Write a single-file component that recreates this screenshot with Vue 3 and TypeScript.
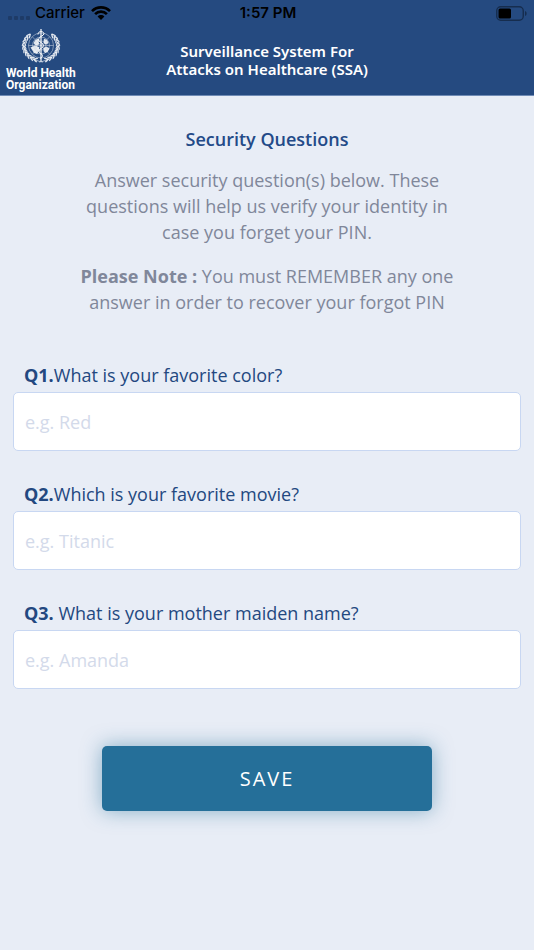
<script setup lang="ts">
import { reactive } from 'vue'

interface Question {
  id: string
  prefix: string
  text: string
  placeholder: string
}

const questions: Question[] = [
  { id: 'q1', prefix: 'Q1.', text: 'What is your favorite color?', placeholder: 'e.g. Red' },
  { id: 'q2', prefix: 'Q2.', text: 'Which is your favorite movie?', placeholder: 'e.g. Titanic' },
  { id: 'q3', prefix: 'Q3.', text: ' What is your mother maiden name?', placeholder: 'e.g. Amanda' },
]

const answers = reactive<Record<string, string>>({ q1: '', q2: '', q3: '' })

// Leaves of the laurel wreath: position and rotation along the left branch.
const leaves = [164, 151, 138, 125, 112, 99, 86, 73, 60, 48].map((deg) => {
  const rad = (deg * Math.PI) / 180
  return { x: 40 - Math.sin(rad) * 34, y: 35 - Math.cos(rad) * 29, deg: -deg }
})
</script>

<template>
  <div class="screen">
    <header class="top">
      <div class="status">
        <div class="carrier">
          <span class="dots"><i v-for="n in 4" :key="n"></i></span>
          <span>Carrier</span>
          <svg class="wifi" viewBox="0 0 20 14" aria-hidden="true">
            <path d="M1 5.2C6 .1 14 .1 19 5.2" />
            <path d="M4.1 8.2c3.3-3.4 8.5-3.4 11.8 0" />
            <path class="solid" d="M6.6 10.4c1.900-1.900 4.900-1.900 6.800 0L10 13.900z" />
          </svg>
        </div>
        <span class="time">1:57 PM</span>
        <svg class="battery" viewBox="0 0 32 15" aria-hidden="true">
          <rect class="case" x="0.75" y="0.75" width="26.500" height="13.500" rx="4" />
          <rect x="2.500" y="2.500" width="12.500" height="10" rx="1.500" />
          <path class="cap" d="M29 5c2.200.7 2.200 4.300 0 5z" />
        </svg>
      </div>
      <div class="bar">
        <div class="logo">
          <svg class="emblem" viewBox="0 0 80 70" aria-hidden="true">
            <g class="thin">
              <circle cx="40" cy="34" r="25" />
              <circle cx="40" cy="34" r="17" />
              <circle cx="40" cy="34" r="9" />
              <path d="M15 34h50M23 17l34 34M57 17L23 51" />
            </g>
            <path class="fill" d="M28 24l5-4 4 2-2 5 2 4-4 3-5-1-3-4zM46 20l6 3 3 5-3 4-5-1-2-5zM19 38l9-4 8 3 1 7-5 7-6-2zM45 39l6-3 6 4-4 7-5 2-3-4z" />
            <g v-for="side in 2" :key="side" :transform="side === 2 ? 'translate(80 0) scale(-1 1)' : undefined">
              <path class="stem" d="M44 67C26 65 7 53 6 35" />
              <g v-for="leaf in leaves" :key="leaf.deg" :transform="`translate(${leaf.x} ${leaf.y}) rotate(${leaf.deg})`">
                <ellipse class="fill" cx="1" cy="-2.600" rx="5" ry="1.500" transform="rotate(24)" />
                <ellipse class="fill" cx="1" cy="2.600" rx="5" ry="1.500" transform="rotate(-24)" />
              </g>
            </g>
            <path class="staff" d="M40 1v64" />
            <path class="snake" d="M34 12c0-8 11-7 12-2 0 5-11 6-11 12s10 6 10 12-9 5-9 11 7 5 7 9-3 4-5 6" />
          </svg>
          <span>World Health<br />Organization</span>
        </div>
        <h1>Surveillance System For<br />Attacks on Healthcare (SSA)</h1>
      </div>
    </header>

    <main>
      <section class="intro">
        <h2>Security Questions</h2>
        <p>Answer security question(s) below. These questions will help us verify your identity in case you forget your PIN.</p>
        <p><strong>Please Note :</strong> You must REMEMBER any one answer in order to recover your forgot PIN</p>
      </section>

      <form @submit.prevent>
        <div v-for="q in questions" :key="q.id" class="field">
          <label :for="q.id"><b>{{ q.prefix }}</b>{{ q.text }}</label>
          <input :id="q.id" v-model="answers[q.id]" type="text" :placeholder="q.placeholder" />
        </div>
        <button type="submit">SAVE</button>
      </form>
    </main>
  </div>
</template>

<style>
body {
  background: #e8edf6;
}
</style>

<style scoped>
.screen {
  min-height: 100vh;
  background: #e8edf6;
  color: #234880;
  font-family: "Open Sans", sans-serif;
  font-size: 18px;
}
.top {
  background: #254a80;
  border-bottom: 1px solid #6f8bb5;
}
.status {
  display: grid;
  grid-template-columns: 1fr auto 1fr;
  align-items: center;
  height: 26px;
  padding: 0 6px 0 8px;
  color: #000;
  font: 500 15px/26px Inter, sans-serif;
}
.time {
  font-weight: 600;
}
.carrier {
  display: flex;
  align-items: center;
}
.dots {
  display: flex;
  gap: 2px;
  margin: 9px 5px 0 0;
}
.dots i {
  width: 4px;
  height: 4px;
  border-radius: 1px;
  background: #1e3b67;
}
.wifi {
  width: 20px;
  height: 14px;
  margin-left: 6px;
  fill: none;
  stroke: #000;
  stroke-width: 2.6;
}
.wifi .solid {
  fill: #000;
  stroke: none;
}
.battery {
  width: 32px;
  height: 15px;
  justify-self: end;
}
.battery .case {
  fill: none;
  stroke: #162d4e;
  stroke-width: 1.4;
}
.battery .cap {
  fill: #162d4e;
}
.bar {
  display: grid;
  grid-template-columns: 1fr auto 1fr;
  align-items: center;
  padding: 2px 6px 4px;
}
.logo {
  display: flex;
  flex-direction: column;
  align-items: center;
  justify-self: start;
  color: #fff;
  font: 700 12px/12px Roboto, sans-serif;
}
.emblem {
  width: 40px;
  height: 36px;
  margin-bottom: 3px;
}
.emblem .thin,
.emblem .stem,
.emblem .staff,
.emblem .snake {
  fill: none;
  stroke: #fff;
  stroke-width: 1.2;
}
.emblem .thin {
  opacity: 0.7;
}
.emblem .staff {
  stroke-width: 2.4;
}
.emblem .snake {
  stroke-width: 2;
}
.emblem .fill {
  fill: #fff;
  opacity: 0.85;
}
h1 {
  margin: 0;
  color: #fff;
  font-family: "Noto Sans", sans-serif;
  font-size: 15px;
  font-weight: 600;
  line-height: 18px;
  text-align: center;
}
main {
  padding: 30px 13px 40px;
}
.intro {
  max-width: 382px;
  margin: 0 auto;
  color: #80879a;
  line-height: 26px;
  text-align: center;
}
h2 {
  margin: 0;
  color: #234a88;
  font-size: 18px;
  font-weight: 600;
  line-height: 26px;
}
.intro p {
  margin: 15px 0 0;
}
.intro p + p {
  margin-top: 18px;
}
form {
  display: flex;
  flex-direction: column;
  gap: 30px;
  padding-top: 47px;
}
.field {
  display: flex;
  flex-direction: column;
  gap: 4px;
}
label {
  padding-left: 11px;
  line-height: 26px;
  white-space: pre-wrap;
}
input {
  box-sizing: border-box;
  width: 100%;
  height: 59px;
  padding: 0 11px;
  border: 1px solid #c8d7f2;
  border-radius: 5px;
  background: #fff;
  color: #234880;
  font: inherit;
}
input::placeholder {
  color: #d3daea;
  opacity: 1;
}
button {
  align-self: center;
  width: 65%;
  height: 65px;
  margin-top: 27px;
  border: 0;
  border-radius: 5px;
  background: #256f99;
  box-shadow: 0 0 20px rgba(37, 111, 153, 0.5);
  color: #fff;
  font: 400 20px/26px "Open Sans", sans-serif;
  letter-spacing: 2px;
}
</style>
